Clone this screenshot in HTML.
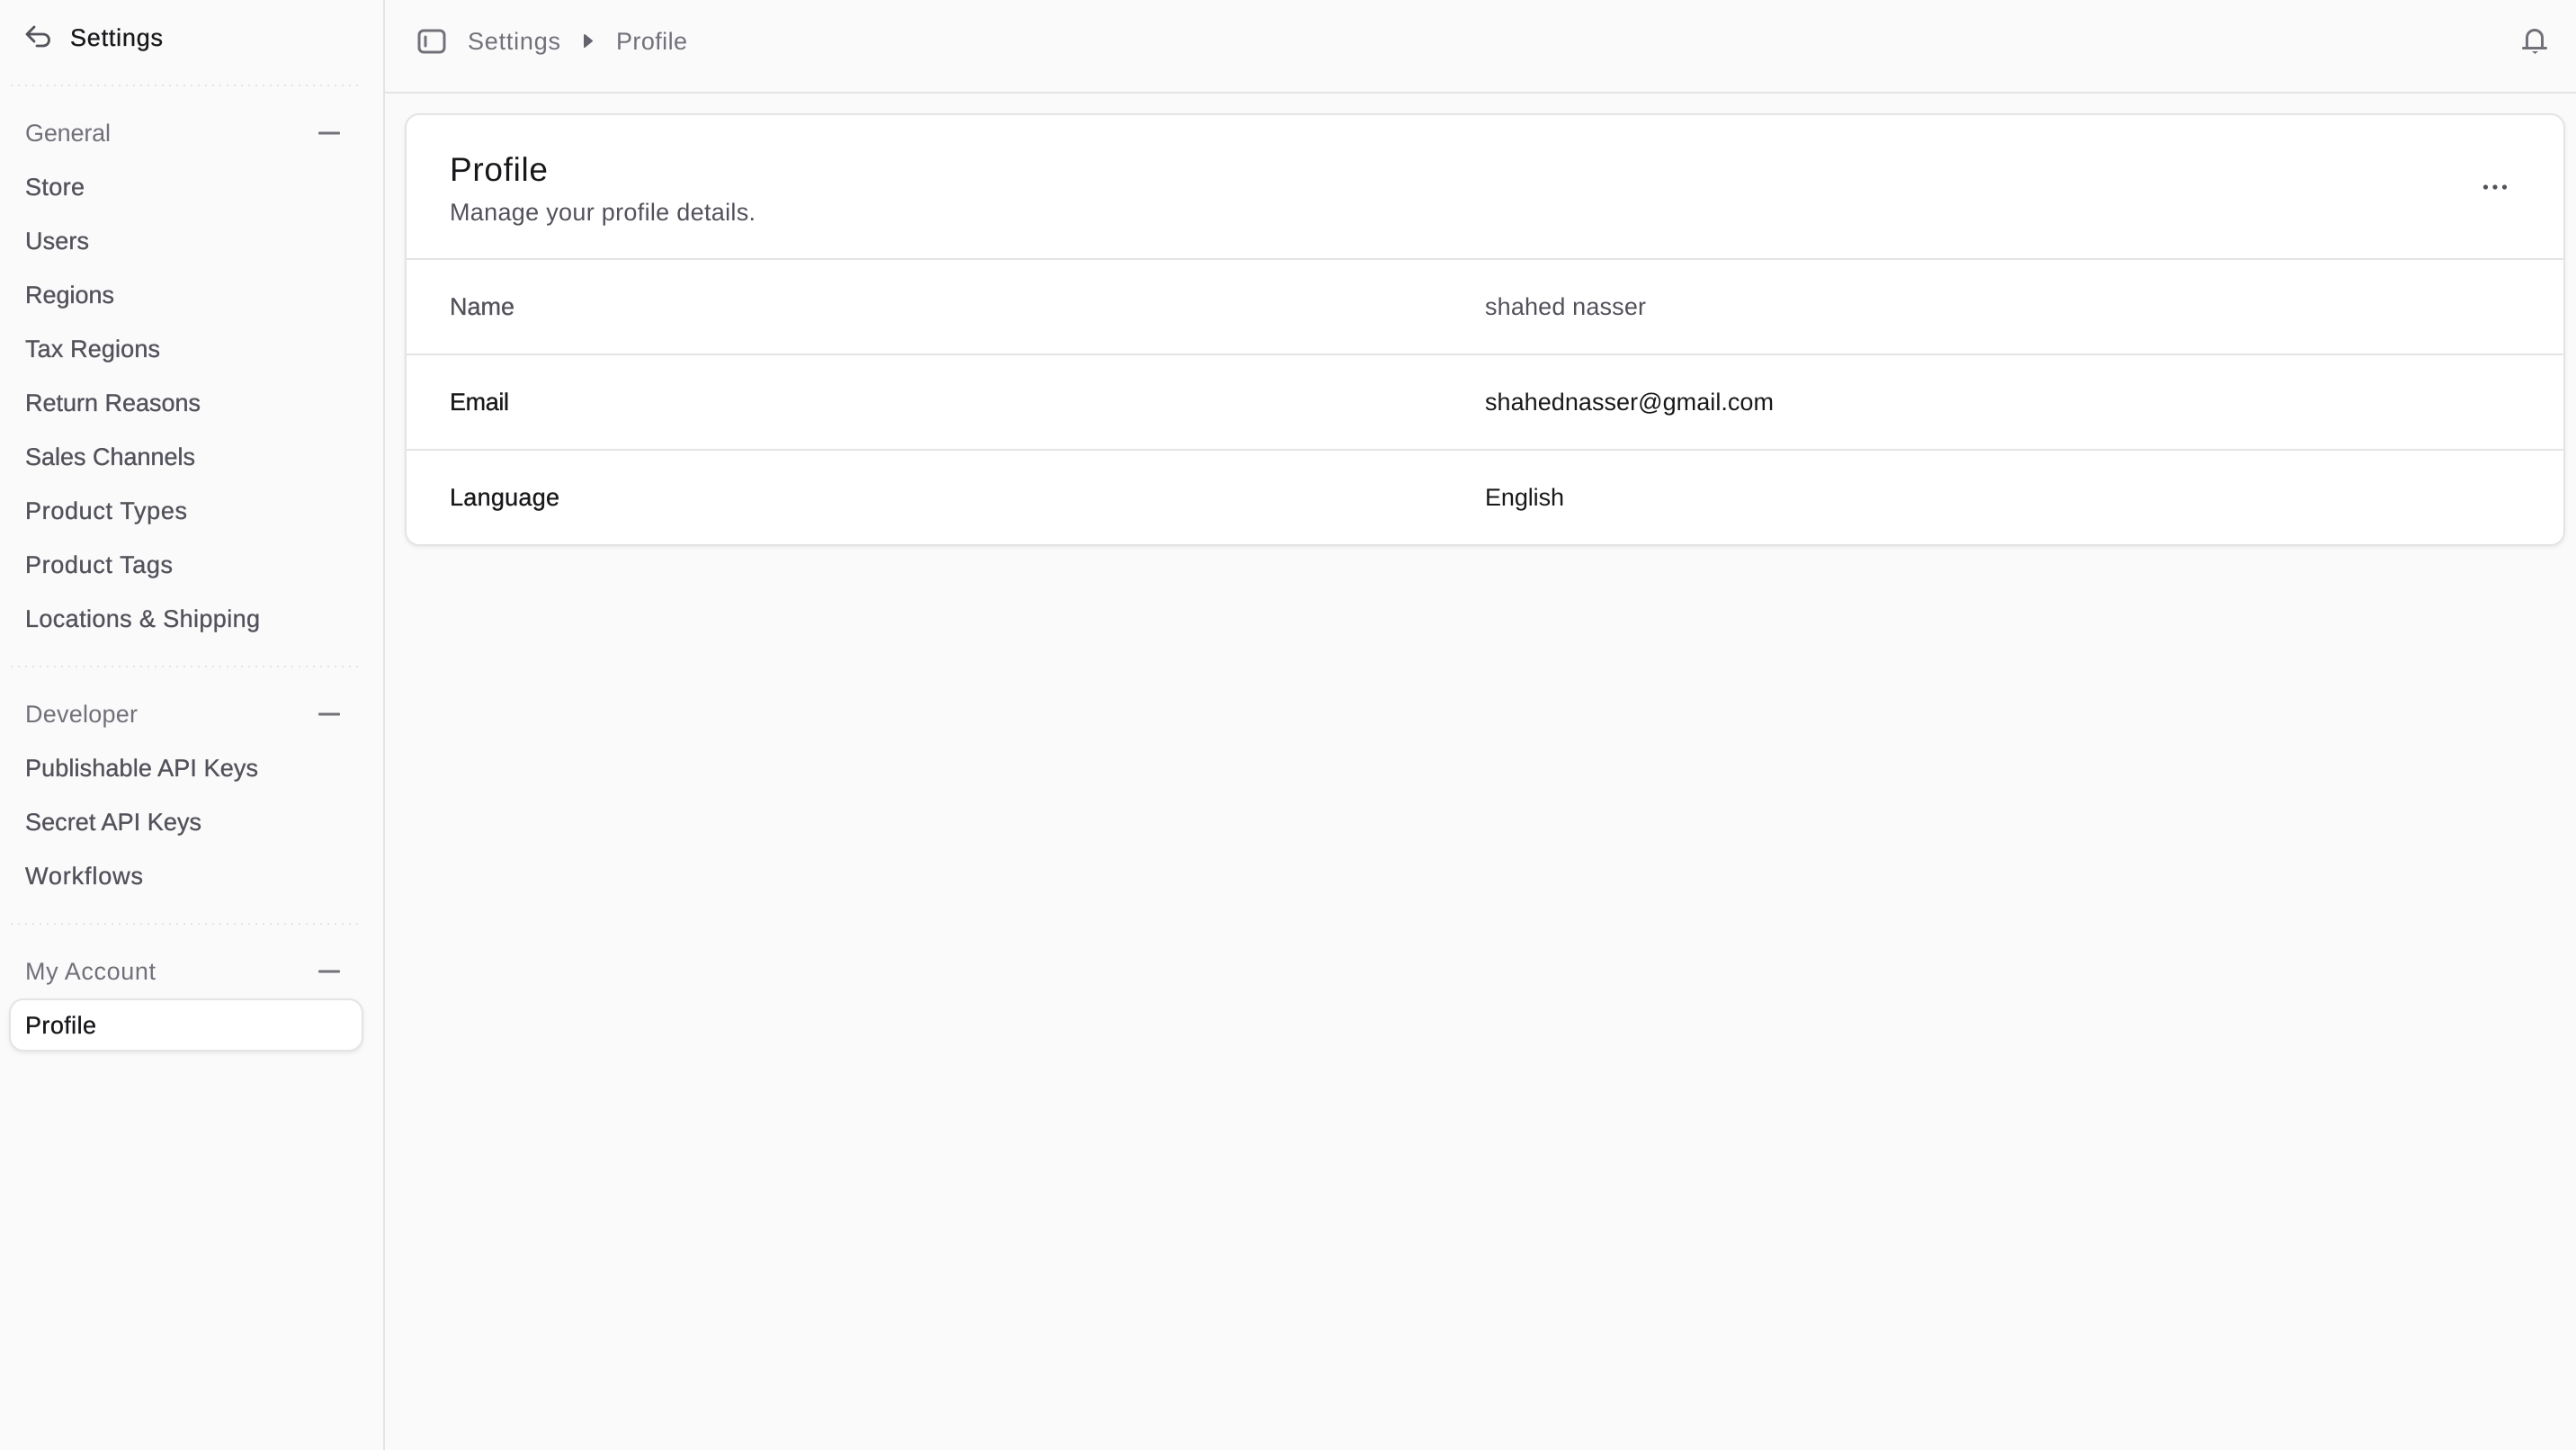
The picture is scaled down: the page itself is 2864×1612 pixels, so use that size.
<!DOCTYPE html>
<html lang="en">
<head>
<meta charset="utf-8">
<title>Settings - Profile</title>
<style>
html,body{margin:0;padding:0;background:#fafafa;width:2864px;height:1612px;overflow:hidden}
svg{display:block}
text{font-family:"Liberation Sans",sans-serif;font-size:27px;text-rendering:geometricPrecision}
.n{fill:#52525b;stroke:#52525b;stroke-width:.35}
.m{fill:#71717a}
.d{fill:#18181b;stroke:#18181b;stroke-width:.35}
.b{fill:#52525b}
.r{fill:#18181b}
.div{stroke:#e4e4e7;stroke-width:2;stroke-dasharray:2 6}
.ic{fill:none;stroke:#71717a;stroke-width:3;stroke-linecap:round;stroke-linejoin:round}
</style>
</head>
<body>
<svg xmlns="http://www.w3.org/2000/svg" width="2864" height="1612" viewBox="0 0 2864 1612">
<rect width="2864" height="1612" fill="#fafafa"/>

<!-- structure -->
<rect x="426" y="0" width="2" height="1612" fill="#e4e4e7"/>
<rect x="428" y="102" width="2436" height="2" fill="#e4e4e7"/>

<!-- sidebar header -->
<path d="M38 30 L30 38 L38 46 M30 38 H48 a6.5 6.5 0 0 1 0 13 H41" fill="none" stroke="#52525b" stroke-width="2.8" stroke-linecap="round" stroke-linejoin="round"/>
<text x="78" y="51" textLength="103" class="d">Settings</text>
<line x1="12" y1="95" x2="400" y2="95" class="div"/>

<!-- General -->
<text x="28" y="157" textLength="95" class="m">General</text>
<rect x="354" y="146.5" width="24" height="3" rx="1" fill="#71717a"/>
<text x="28" y="217" textLength="66" class="n">Store</text>
<text x="28" y="277" textLength="71" class="n">Users</text>
<text x="28" y="337" textLength="99" class="n">Regions</text>
<text x="28" y="397" textLength="150" class="n">Tax Regions</text>
<text x="28" y="457" textLength="195" class="n">Return Reasons</text>
<text x="28" y="517" textLength="189" class="n">Sales Channels</text>
<text x="28" y="577" textLength="180" class="n">Product Types</text>
<text x="28" y="637" textLength="164" class="n">Product Tags</text>
<text x="28" y="697" textLength="261" class="n">Locations &amp; Shipping</text>
<line x1="12" y1="741" x2="400" y2="741" class="div"/>

<!-- Developer -->
<text x="28" y="803" textLength="125" class="m">Developer</text>
<rect x="354" y="792.5" width="24" height="3" rx="1" fill="#71717a"/>
<text x="28" y="863" textLength="259" class="n">Publishable API Keys</text>
<text x="28" y="923" textLength="196" class="n">Secret API Keys</text>
<text x="28" y="983" textLength="131" class="n">Workflows</text>
<line x1="12" y1="1027" x2="400" y2="1027" class="div"/>

<!-- My Account -->
<text x="28" y="1089" textLength="145" class="m">My Account</text>
<rect x="354" y="1078.5" width="24" height="3" rx="1" fill="#71717a"/>
<rect x="11" y="1111" width="392" height="57" rx="15" fill="#fff" stroke="#e4e4e7" stroke-width="2" style="filter:drop-shadow(0 2px 2px rgba(0,0,0,.07))"/>
<text x="28" y="1149" textLength="79" class="d">Profile</text>

<!-- top bar -->
<rect x="466" y="34" width="28" height="24" rx="5" class="ic"/>
<line x1="473" y1="41" x2="473" y2="51" class="ic" stroke-width="2.6"/>
<text x="520" y="55" textLength="103" class="m">Settings</text>
<path d="M650 39 L658 45.5 L650 52 Z" fill="#64646c" stroke="#64646c" stroke-width="2" stroke-linejoin="round"/>
<text x="685" y="55" textLength="79" class="m">Profile</text>
<path d="M2809.5 52.5 V42 a8.5 8.5 0 0 1 17 0 V52.5" class="ic"/>
<path d="M2805.5 53.5 H2830.5" class="ic"/>
<path d="M2815 57 h7 l-3.5 3 z" fill="#71717a"/>

<!-- card -->
<rect x="451" y="127" width="2400" height="479" rx="15" fill="#fff" stroke="#e4e4e7" stroke-width="2" style="filter:drop-shadow(0 2px 2px rgba(0,0,0,.06))"/>
<text x="500" y="201" textLength="109" style="font-size:37px" class="r">Profile</text>
<text x="500" y="245" textLength="340" class="b">Manage your profile details.</text>
<circle cx="2763.5" cy="208" r="2.6" fill="#52525b"/>
<circle cx="2774" cy="208" r="2.6" fill="#52525b"/>
<circle cx="2784.5" cy="208" r="2.6" fill="#52525b"/>

<rect x="452" y="287" width="2398" height="2" fill="#e4e4e7"/>
<text x="500" y="350" textLength="72" class="n">Name</text>
<text x="1651" y="350" textLength="179" class="b">shahed nasser</text>

<rect x="452" y="393" width="2398" height="2" fill="#e4e4e7"/>
<text x="500" y="456" textLength="66" class="d">Email</text>
<text x="1651" y="456" textLength="321" class="r">shahednasser@gmail.com</text>

<rect x="452" y="499" width="2398" height="2" fill="#e4e4e7"/>
<text x="500" y="562" textLength="122" class="d">Language</text>
<text x="1651" y="562" textLength="88" class="r">English</text>
</svg>
</body>
</html>
